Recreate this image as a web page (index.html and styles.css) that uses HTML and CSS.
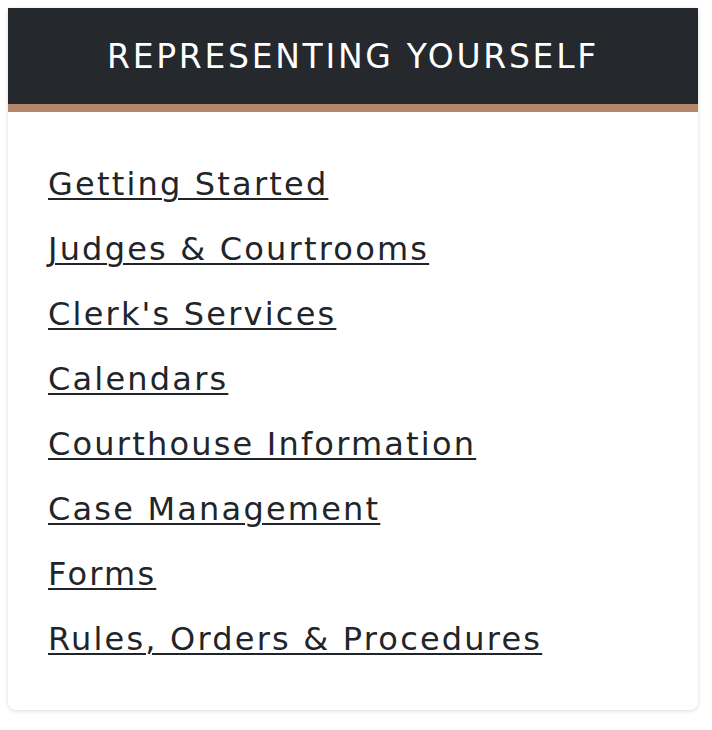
FILE: index.html
```html
<!DOCTYPE html>
<html lang="en">
<head>
<meta charset="utf-8">
<title>Representing Yourself</title>
<link rel="stylesheet" href="styles.css">
</head>
<body>
<nav class="card">
  <h2 class="card-title">REPRESENTING YOURSELF</h2>
  <ul class="links">
    <li><a href="#">Getting Started</a></li>
    <li><a href="#">Judges &amp; Courtrooms</a></li>
    <li><a href="#">Clerk's Services</a></li>
    <li><a href="#">Calendars</a></li>
    <li><a href="#">Courthouse Information</a></li>
    <li><a href="#">Case Management</a></li>
    <li><a href="#">Forms</a></li>
    <li><a href="#">Rules, Orders &amp; Procedures</a></li>
  </ul>
</nav>
</body>
</html>
```

FILE: styles.css
```css
html, body {
  margin: 0;
  padding: 0;
  background: #ffffff;
}
body {
  padding: 8px;
  font-family: "DejaVu Sans", "Liberation Sans", sans-serif;
}
.card {
  width: 690px;
  background: #ffffff;
  border-radius: 0 0 8px 8px;
  box-shadow: 0 1px 4px rgba(0, 0, 0, 0.14);
  overflow: hidden;
}
.card-title {
  margin: 0;
  height: 96px;
  display: flex;
  align-items: center;
  justify-content: center;
  background: #25282d;
  border-bottom: 8px solid #b5876a;
  color: #ffffff;
  font-weight: 400;
  font-size: 33px;
  letter-spacing: 2.7px;
}
.links {
  list-style: none;
  margin: 0;
  padding: 40px 40px 38px 40px;
}
.links li {
  font-size: 32px;
  line-height: 65px;
}
.links a {
  color: #212529;
  text-decoration: underline;
  text-decoration-thickness: 2px;
  text-underline-offset: 3px;
  letter-spacing: 2.2px;
}
```
